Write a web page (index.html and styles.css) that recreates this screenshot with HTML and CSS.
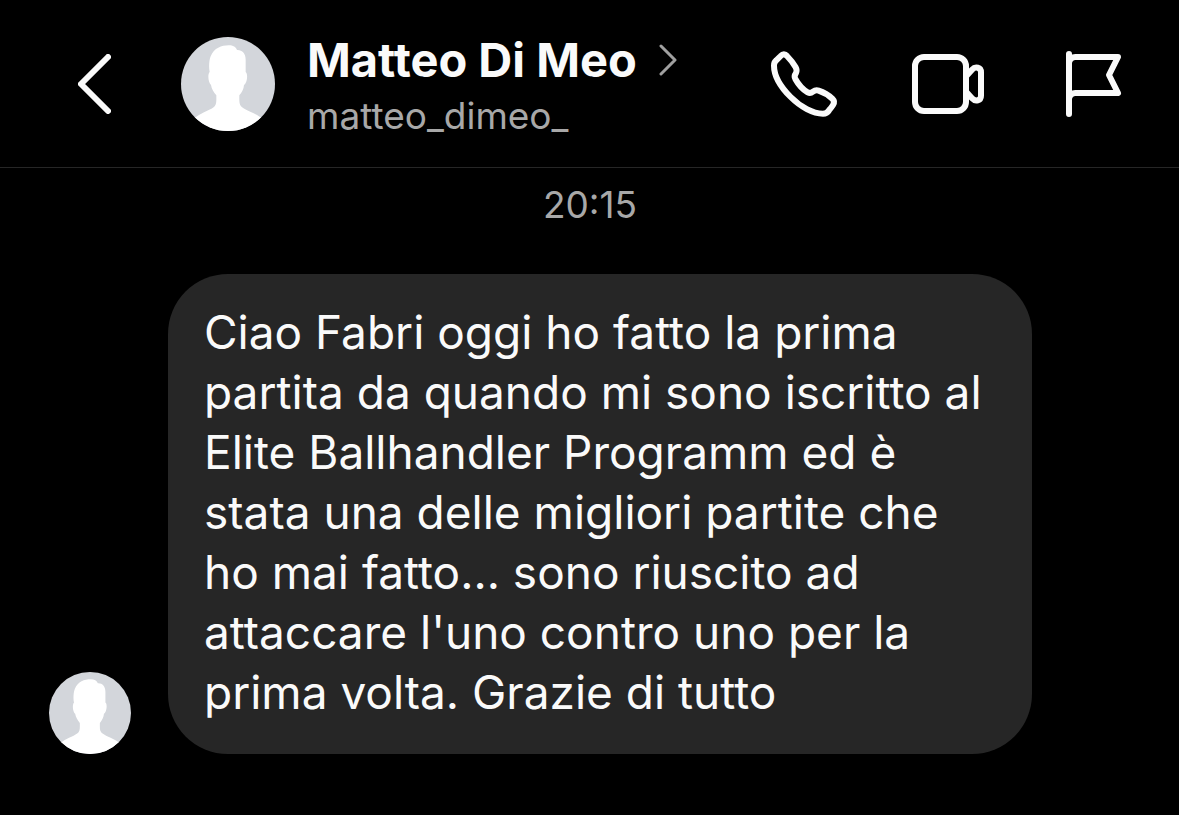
FILE: index.html
```html
<!DOCTYPE html>
<html lang="it">
<head>
<meta charset="utf-8">
<meta name="viewport" content="width=device-width, initial-scale=1">
<title>Matteo Di Meo</title>
<link rel="stylesheet" href="styles.css">
</head>
<body>
<svg class="defs" aria-hidden="true">
  <symbol id="person" viewBox="0 0 282 282">
    <path d="M30 282V248L45 240C65 226 92 218 101 208C107 201 106 190 106 175C98 166 92 156 90 144C82 138 79 112 86 105C83 92 84 70 89 58C99 33 122 25 143 25C157 25 164 30 168 39C183 38 194 49 194 68V105C202 110 198 140 189 144C188 156 183 166 175 175C175 190 174 201 180 208C189 218 216 226 237 240L252 248V282Z"/>
  </symbol>
</svg>
<header class="header">
  <button class="back" aria-label="Indietro">
    <svg class="back-icon" viewBox="0 0 33 60"><path d="M30 3L3 30L30 57"/></svg>
  </button>
  <svg class="avatar avatar-large" role="img" aria-label="Foto profilo"><use href="#person"/></svg>
  <div class="contact">
    <a class="name" href="#profile"><span>Matteo Di Meo</span>
      <svg class="chevron" viewBox="0 0 18 32"><path d="M2 2L16 16L2 30"/></svg>
    </a>
    <div class="username">matteo_dimeo_</div>
  </div>
  <nav class="actions" aria-label="Azioni">
    <button aria-label="Chiama">
      <svg class="icon" viewBox="0 0 216 216"><path d="M18 53Q18 43 24 38L38 24Q48 13 57 24C68 35 76 46 83 58Q88 67 84 75Q77 85 82 93C92 111 105 125 119 133Q127 137 135 131Q143 125 152 128C167 133 182 142 193 152Q202 161 195 171Q190 179 183 187Q177 197 165 197C135 197 98 177 68 147C35 114 18 82 18 53Z"/></svg>
    </button>
    <button aria-label="Videochiamata">
      <svg class="icon" viewBox="0 0 216 216"><rect x="9" y="27" width="153" height="162" rx="27"/><path d="M165 82L180 65C190 54 207 58 207 73V143C207 158 190 162 180 151L165 134"/></svg>
    </button>
    <button aria-label="Contrassegna">
      <svg class="icon" viewBox="0 0 216 216"><path d="M39 18V198M39 43Q44 27 58 27H186L159 81L186 135H58Q44 135 39 151"/></svg>
    </button>
  </nav>
</header>
<main class="chat">
  <time class="time" datetime="20:15">20:15</time>
  <div class="message">
    <svg class="avatar avatar-small" role="img" aria-label="Matteo Di Meo"><use href="#person"/></svg>
    <p class="bubble">Ciao Fabri oggi ho fatto la prima<br>partita da quando mi sono iscritto al<br>Elite Ballhandler Programm ed è<br>stata una delle migliori partite che<br>ho mai fatto... sono riuscito ad<br>attaccare l'uno contro uno per la<br>prima volta. Grazie di tutto</p>
  </div>
</main>
</body>
</html>
```

FILE: styles.css
```css
* { box-sizing: border-box; }

body {
  margin: 0;
  min-height: 100vh;
  background: #000;
  color: #fafafa;
  font-family: Inter, "Liberation Sans", sans-serif;
}

.defs { display: none; }

button {
  display: flex;
  padding: 0;
  border: 0;
  background: none;
  color: inherit;
}

.header {
  display: flex;
  align-items: center;
  padding: 28px 51px 27px 78px;
  border-bottom: 1px solid #262626;
}

.back { margin-right: 70px; }

.back-icon,
.chevron,
.icon {
  fill: none;
  stroke: currentColor;
  stroke-linecap: round;
  stroke-linejoin: round;
}

.back-icon {
  width: 33px;
  height: 60px;
  stroke-width: 6;
}

.avatar {
  flex: none;
  border-radius: 50%;
  background: #d3d6db;
  fill: #fff;
}

.avatar-large {
  width: 94px;
  height: 94px;
  margin-right: 32px;
}

.avatar-small {
  width: 82px;
  height: 82px;
}

.contact { flex: 1; }

.name {
  display: flex;
  align-items: center;
  gap: 22px;
  color: inherit;
  font-size: 47px;
  font-weight: 700;
  line-height: 64px;
  text-decoration: none;
}

.chevron {
  width: 18px;
  height: 32px;
  color: #a0a0a0;
  stroke-width: 3;
}

.username {
  color: #a8a8a8;
  font-size: 37px;
  line-height: 48px;
}

.actions {
  display: flex;
  gap: 72px;
}

.icon {
  width: 72px;
  height: 72px;
  stroke-width: 18;
}

.chat { padding: 15px 48px 60px 49px; }

.time {
  display: block;
  color: #a8a8a8;
  font-size: 37px;
  line-height: 44px;
  text-align: center;
}

.message {
  display: flex;
  align-items: flex-end;
  gap: 37px;
  margin-top: 47px;
}

.bubble {
  margin: 0;
  padding: 28px 50px 32px 36px;
  border-radius: 60px;
  background: #262626;
  font-size: 46px;
  line-height: 60px;
}
```
